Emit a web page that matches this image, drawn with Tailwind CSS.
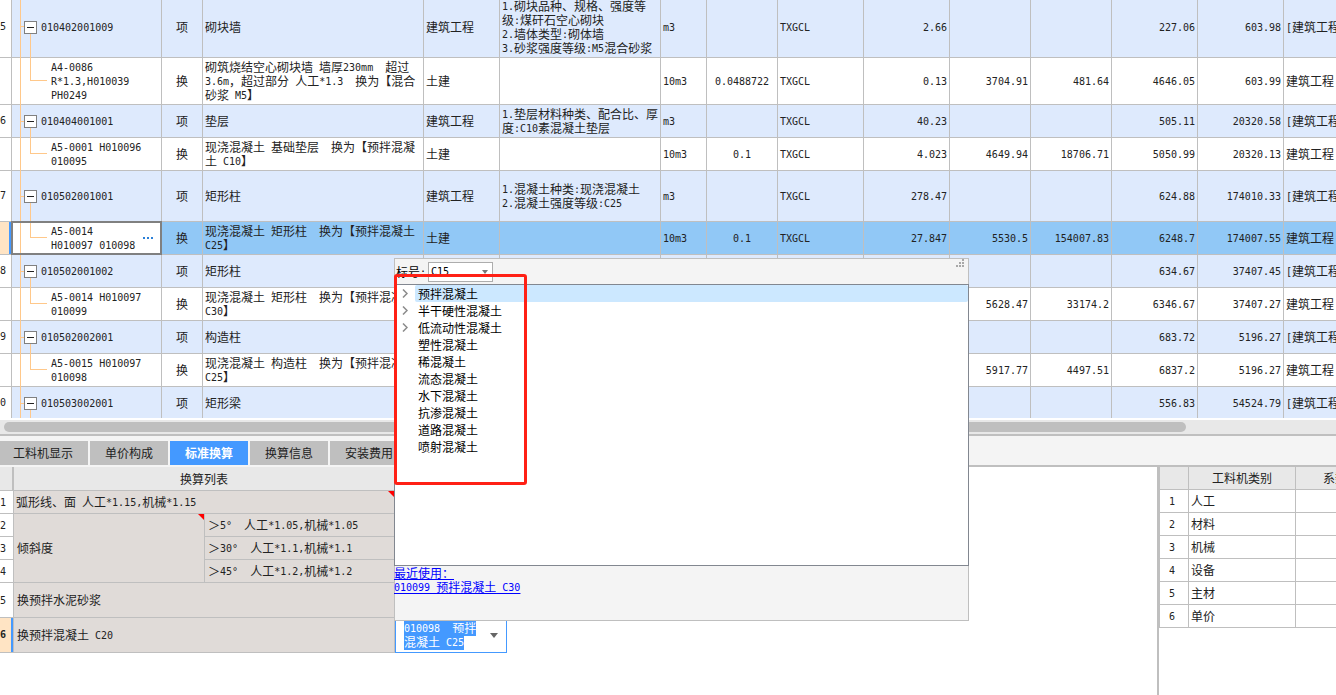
<!DOCTYPE html>
<html lang="zh-CN">
<head>
<meta charset="utf-8">
<title>标准换算</title>
<script src="https://cdn.jsdelivr.net/npm/@tailwindcss/browser@4"></script>
</head>
<body class="h-screen overflow-hidden bg-white text-[12px] leading-[14px] text-[#222] font-['Noto_Sans_CJK_SC',sans-serif]">
<div class="relative flex h-full flex-col overflow-hidden">

  <!-- Bill of quantities -->
  <section class="h-[418px] shrink-0 overflow-hidden">
    <table class="-mt-1 w-full table-fixed border-separate border-spacing-0" aria-label="清单">
      <colgroup>
        <col class="w-[12px]"><col class="w-[150px]"><col class="w-[41px]"><col class="w-[221px]"><col class="w-[76px]"><col class="w-[161px]"><col class="w-[46px]"><col class="w-[71px]"><col class="w-[86px]"><col class="w-[86px]"><col class="w-[81px]"><col class="w-[81px]"><col class="w-[86px]"><col class="w-[86px]"><col>
      </colgroup>
      <tbody id="bill"></tbody>
    </table>
  </section>

  <!-- Horizontal scrollbar -->
  <div class="mt-0.5 h-4 shrink-0 border-b-2 border-[#bfbfbf] bg-[#e8e8e8] px-1 pt-0.5">
    <div class="h-2.5 w-[89%] rounded-full bg-[#bfbfbf]"></div>
  </div>

  <!-- Tabs -->
  <nav class="flex h-[29px] shrink-0 items-end gap-0.5 bg-[#f4f4f4] pt-[5px]" role="tablist">
    <button role="tab" class="h-full bg-[#bfbfbf] pr-[15px] pl-[13px]">工料机显示</button>
    <button role="tab" class="h-full bg-[#bfbfbf] px-[15px]">单价构成</button>
    <button role="tab" aria-selected="true" class="h-full bg-[#4499ff] px-[15px] font-bold text-white">标准换算</button>
    <button role="tab" class="h-full bg-[#bfbfbf] px-[15px]">换算信息</button>
    <button role="tab" class="h-full bg-[#bfbfbf] px-[15px]">安装费用</button>
  </nav>

  <div class="flex min-h-0 flex-1">
    <!-- Conversion list -->
    <section class="w-[507px] shrink-0 border-t-2 border-[#f4f4f4]">
      <table class="w-full table-fixed border-separate border-spacing-0" aria-label="换算列表">
        <colgroup><col class="w-[14px]"><col class="w-[191px]"><col class="w-[190px]"><col></colgroup>
        <thead>
          <tr class="h-6 bg-[#e8e8e8]">
            <td class="border-r-2 border-b border-[#bfbfbf]"></td>
            <th colspan="2" class="border-r border-b border-[#bfbfbf] font-normal">换算列表</th>
            <td class="border-b border-[#bfbfbf]"></td>
          </tr>
        </thead>
        <tbody class="[&_td]:border-r [&_td]:border-b [&_td]:border-[#bfbfbf] [&_td]:p-0">
          <tr class="h-[23px]">
            <td data-t>1</td>
            <td colspan="2" class="bg-[#e0dbd8]"><div class="flex h-[22px] items-center justify-between pl-0.5"><span data-t class="whitespace-pre">弧形线、面 人工*1.15,机械*1.15</span><svg class="size-[6px] self-start" viewBox="0 0 6 6"><path d="M0 0h6v6z" fill="#f00"/></svg></div></td>
            <td></td>
          </tr>
          <tr class="h-[23px]">
            <td data-t>2</td>
            <td rowspan="3" class="bg-[#e0dbd8]"><div class="flex h-[68px] items-center justify-between pl-[3px]"><span>倾斜度</span><svg class="size-[6px] self-start" viewBox="0 0 6 6"><path d="M0 0h6v6z" fill="#f00"/></svg></div></td>
            <td class="bg-[#e0dbd8]"><div data-t class="pl-[3px] whitespace-pre">＞5°  人工*1.05,机械*1.05</div></td>
            <td></td>
          </tr>
          <tr class="h-[23px]">
            <td data-t>3</td>
            <td class="bg-[#e0dbd8]"><div data-t class="pl-[3px] whitespace-pre">＞30°  人工*1.1,机械*1.1</div></td>
            <td></td>
          </tr>
          <tr class="h-[23px]">
            <td data-t>4</td>
            <td class="bg-[#e0dbd8]"><div data-t class="pl-[3px] whitespace-pre">＞45°  人工*1.2,机械*1.2</div></td>
            <td></td>
          </tr>
          <tr class="h-[35px]">
            <td data-t>5</td>
            <td colspan="2" class="bg-[#e0dbd8]"><div class="pl-[3px]">换预拌水泥砂浆</div></td>
            <td></td>
          </tr>
          <tr class="h-[35px]">
            <td class="bg-[#ffe4c4]"><div data-t class="flex h-[34px] items-center border-r-2 border-[#4499ff] font-bold">6</div></td>
            <td colspan="2" class="bg-[#e0dbd8]"><div data-t class="pl-[3px] whitespace-pre">换预拌混凝土 C20</div></td>
            <td class="border-[#4499ff]!">
              <button aria-haspopup="tree" aria-expanded="true" aria-label="材料" class="flex h-[34px] w-full items-center justify-between border-l border-[#4499ff] bg-white px-2 text-left text-white outline-none">
                <span class="whitespace-pre"><span data-t class="bg-[#4499ff]">010098  预拌</span><br><span data-t class="bg-[#4499ff]">混凝土 C25</span></span>
                <svg class="h-[5px] w-2" viewBox="0 0 8 5"><path d="M0 0h8L4 5z" fill="#666"/></svg>
              </button>
            </td>
          </tr>
        </tbody>
      </table>
    </section>
    <div class="flex-1 border-t-2 border-[#bfbfbf]"></div>
    <!-- Coefficients -->
    <section class="w-[179px] shrink-0 overflow-hidden border-t-2 border-l-2 border-[#bfbfbf]">
      <table class="w-[216px] table-fixed border-separate border-spacing-0 border-l border-[#bfbfbf] [&_td]:border-r [&_td]:border-b [&_td]:border-[#bfbfbf] [&_td]:p-0 [&_td]:pl-0.5 [&_th]:border-r [&_th]:border-b [&_th]:border-[#bfbfbf] [&_th]:bg-[#e8e8e8] [&_th]:font-normal" aria-label="工料机系数">
        <colgroup><col class="w-[29px]"><col class="w-[107px]"><col></colgroup>
        <thead><tr class="h-[23px]"><th></th><th>工料机类别</th><th>系数</th></tr></thead>
        <tbody>
          <tr class="h-[23px]"><td><div data-t class="pr-1.5 text-center">1</div></td><td>人工</td><td></td></tr>
          <tr class="h-[23px]"><td><div data-t class="pr-1.5 text-center">2</div></td><td>材料</td><td></td></tr>
          <tr class="h-[23px]"><td><div data-t class="pr-1.5 text-center">3</div></td><td>机械</td><td></td></tr>
          <tr class="h-[23px]"><td><div data-t class="pr-1.5 text-center">4</div></td><td>设备</td><td></td></tr>
          <tr class="h-[23px]"><td><div data-t class="pr-1.5 text-center">5</div></td><td>主材</td><td></td></tr>
          <tr class="h-[23px]"><td><div data-t class="pr-1.5 text-center">6</div></td><td>单价</td><td></td></tr>
        </tbody>
      </table>
    </section>
  </div>

  <!-- Material picker -->
  <div role="dialog" aria-label="选择材料" class="absolute top-[258px] left-[394px] flex h-[363px] w-[575px] flex-col border border-[#bfbfbf] bg-[#f4f4f4] text-black">
    <div class="flex h-[25px] shrink-0 items-center">
      <label for="grade" class="w-[33px] pl-px" data-t>标号:</label>
      <div class="relative">
        <select id="grade" class="h-5 w-[65px] appearance-none border border-[#adadad] bg-white pl-0.5 font-['DejaVu_Sans_Mono','Noto_Sans_CJK_SC',monospace] text-[10px] outline-none"><option>C15</option></select>
        <svg class="pointer-events-none absolute top-2 right-[5px] h-[4px] w-[6px]" viewBox="0 0 6 4"><path d="M0 0h6L3 4z" fill="#777"/></svg>
      </div>
      <svg class="mr-1 ml-auto h-2 w-2 self-start" viewBox="0 0 8 8" shape-rendering="crispEdges" fill="#a8a8a8"><path d="M6 0h2v2H6zM3 3h2v2H3zM6 3h2v2H6zM0 6h2v2H0zM3 6h2v2H3zM6 6h2v2H6z"/></svg>
    </div>
    <ul id="tree" role="tree" class="-mx-px h-[282px] shrink-0 border border-[#828790] bg-white"></ul>
    <div class="-ml-px flex flex-col items-start text-[#0000ff] underline">
      <a href="#recent">最近使用：</a>
      <a href="#010099" data-t class="whitespace-pre">010099 预拌混凝土 C30</a>
    </div>
  </div>

  <!-- Highlight frame -->
  <div class="pointer-events-none absolute top-[274px] left-[394px] h-[211px] w-[133px] rounded-[3px] border-3 border-[#ff2015]"></div>
</div>

<script>
// Latin runs are set in a monospace face half as wide as a Chinese character.
const mix = s => s.replace(/[\x20-\x7e°]+/g, m => `<span class="align-[1px] font-['DejaVu_Sans_Mono',monospace] text-[10px] leading-none">${m}</span>`);

// height, number, code, name, discipline, features, unit, factor, formula, quantity, price, total, composite price, composite total
const rows = [
  ['h-[61px]', '5', '010402001009', '砌块墙', '建筑工程', '1.砌块品种、规格、强度等\n级:煤矸石空心砌块\n2.墙体类型:砌体墙\n3.砂浆强度等级:M5混合砂浆', 'm3', '', 'TXGCL', '2.66', '', '', '227.06', '603.98'],
  ['h-[46px]', '', 'A4-0086\nR*1.3,H010039\nPH0249', '砌筑烧结空心砌块墙 墙厚230mm  超过\n3.6m，超过部分 人工*1.3  换为【混合\n砂浆 M5】', '土建', '', '10m3', '0.0488722', 'TXGCL', '0.13', '3704.91', '481.64', '4646.05', '603.99'],
  ['h-[32px]', '6', '010404001001', '垫层', '建筑工程', '1.垫层材料种类、配合比、厚\n度:C10素混凝土垫层', 'm3', '', 'TXGCL', '40.23', '', '', '505.11', '20320.58'],
  ['h-[32px]', '', 'A5-0001 H010096\n010095', '现浇混凝土 基础垫层  换为【预拌混凝\n土 C10】', '土建', '', '10m3', '0.1', 'TXGCL', '4.023', '4649.94', '18706.71', '5050.99', '20320.13'],
  ['h-[50px]', '7', '010502001001', '矩形柱', '建筑工程', '1.混凝土种类:现浇混凝土\n2.混凝土强度等级:C25', 'm3', '', 'TXGCL', '278.47', '', '', '624.88', '174010.33'],
  ['h-[32px]', '', 'A5-0014\nH010097 010098', '现浇混凝土 矩形柱  换为【预拌混凝土\nC25】', '土建', '', '10m3', '0.1', 'TXGCL', '27.847', '5530.5', '154007.83', '6248.7', '174007.55', true],
  ['h-[32px]', '8', '010502001002', '矩形柱', '', '1.混凝土种类:现浇混凝土\n2.混凝土强度等级:C30', '', '', '', '', '', '', '634.67', '37407.45'],
  ['h-[32px]', '', 'A5-0014 H010097\n010099', '现浇混凝土 矩形柱  换为【预拌混凝土\nC30】', '', '', '', '', '', '', '5628.47', '33174.2', '6346.67', '37407.27'],
  ['h-[32px]', '9', '010502002001', '构造柱', '', '', '', '', '', '', '', '', '683.72', '5196.27'],
  ['h-[32px]', '', 'A5-0015 H010097\n010098', '现浇混凝土 构造柱  换为【预拌混凝土\nC25】', '', '', '', '', '', '', '5917.77', '4497.51', '6837.2', '5196.27'],
  ['h-[32px]', '0', '010503002001', '矩形梁', '', '', '', '', '', '', '', '', '556.83', '54524.79'],
];
const align = ['', '', '', '', 'text-center', '', 'text-right', 'text-right', 'text-right', 'text-right', 'text-right'];
const parentTree = code => `
  <div class="w-[3px] h-px self-center bg-[#ffc88a]"></div>
  <div class="flex w-[13px] flex-col items-center -mb-px">
    <div class="flex-1"></div>
    <button aria-label="折叠" class="flex size-[13px] shrink-0 items-center justify-center border border-[#808080] bg-white"><span class="h-px w-[7px] bg-[#222]"></span></button>
    <div class="w-px flex-1 bg-[#ffc88a]"></div>
  </div>
  <div class="self-center pl-1 whitespace-pre">${mix(code)}</div>`;
const childTree = (code, sel) => `
  <div class="ml-[9px] h-1/2 w-[17px] border-b border-l border-[#ffc88a]"></div>
  <div class="self-center pl-1 whitespace-pre">${mix(code)}</div>
  ${sel ? '<button aria-label="选择" class="mr-2 ml-auto flex items-center gap-0.5 self-center"><span class="size-[2px] bg-[#2b80d8]"></span><span class="size-[2px] bg-[#2b80d8]"></span><span class="size-[2px] bg-[#2b80d8]"></span></button>' : ''}`;
document.getElementById('bill').innerHTML = rows.map(([h, no, code, name, ...rest]) => {
  const sel = rest[10] === true;
  const cell = 'border-r border-b border-[#bfbfbf] p-0';
  const vals = [name, ...rest.slice(0, 10)];
  const bg = sel ? 'bg-[#91c8f6]' : no ? 'bg-[#deeafd]' : 'bg-white';
  return `<tr class="${bg}">
    <td class="${cell} ${sel ? 'bg-[#ffe4c4]' : 'bg-white'}"><div class="${h} flex items-center ${sel ? 'border-r-2 border-[#4499ff]' : ''}">${mix(no)}</div></td>
    <td class="${cell}"><div class="${h} flex ${sel ? 'bg-white outline-2 -outline-offset-1 outline-[#808080]' : ''}">
      <div class="ml-2 -mb-px w-px shrink-0 bg-[#ffc88a]"></div>${no ? parentTree(code) : childTree(code, sel)}</div></td>
    <td class="${cell} text-center">${no ? '项' : '换'}</td>
    ${vals.map((v, i) => `<td class="${cell}"><div class="px-0.5 whitespace-pre ${align[i]}">${mix(v)}</div></td>`).join('')}
    <td class="border-b border-[#bfbfbf] p-0"><div class="overflow-hidden pl-0.5 whitespace-pre">${mix(no ? '[建筑工程]' : '建筑工程')}</div></td>
  </tr>`;
}).join('');

document.getElementById('tree').innerHTML = ['预拌混凝土', '半干硬性混凝土', '低流动性混凝土', '塑性混凝土', '稀混凝土', '流态混凝土', '水下混凝土', '抗渗混凝土', '道路混凝土', '喷射混凝土'].map((t, i) => `
  <li role="treeitem" class="flex h-[17px] items-center">
    <span class="flex w-5 shrink-0 justify-center">${i < 3 ? '<button aria-label="展开"><svg class="h-[9px] w-[6px]" viewBox="0 0 6 9" fill="none" stroke="#8a8a8a" stroke-width="1.5"><path d="M1 .5l4 4-4 4"/></svg></button>' : ''}</span>
    <span class="flex h-full flex-1 items-center rounded-xs pl-[3px] ${i ? '' : 'bg-[#cce8ff]'}">${t}</span>
  </li>`).join('');

document.querySelectorAll('[data-t]').forEach(e => { e.innerHTML = mix(e.textContent); });
</script>
</body>
</html>
